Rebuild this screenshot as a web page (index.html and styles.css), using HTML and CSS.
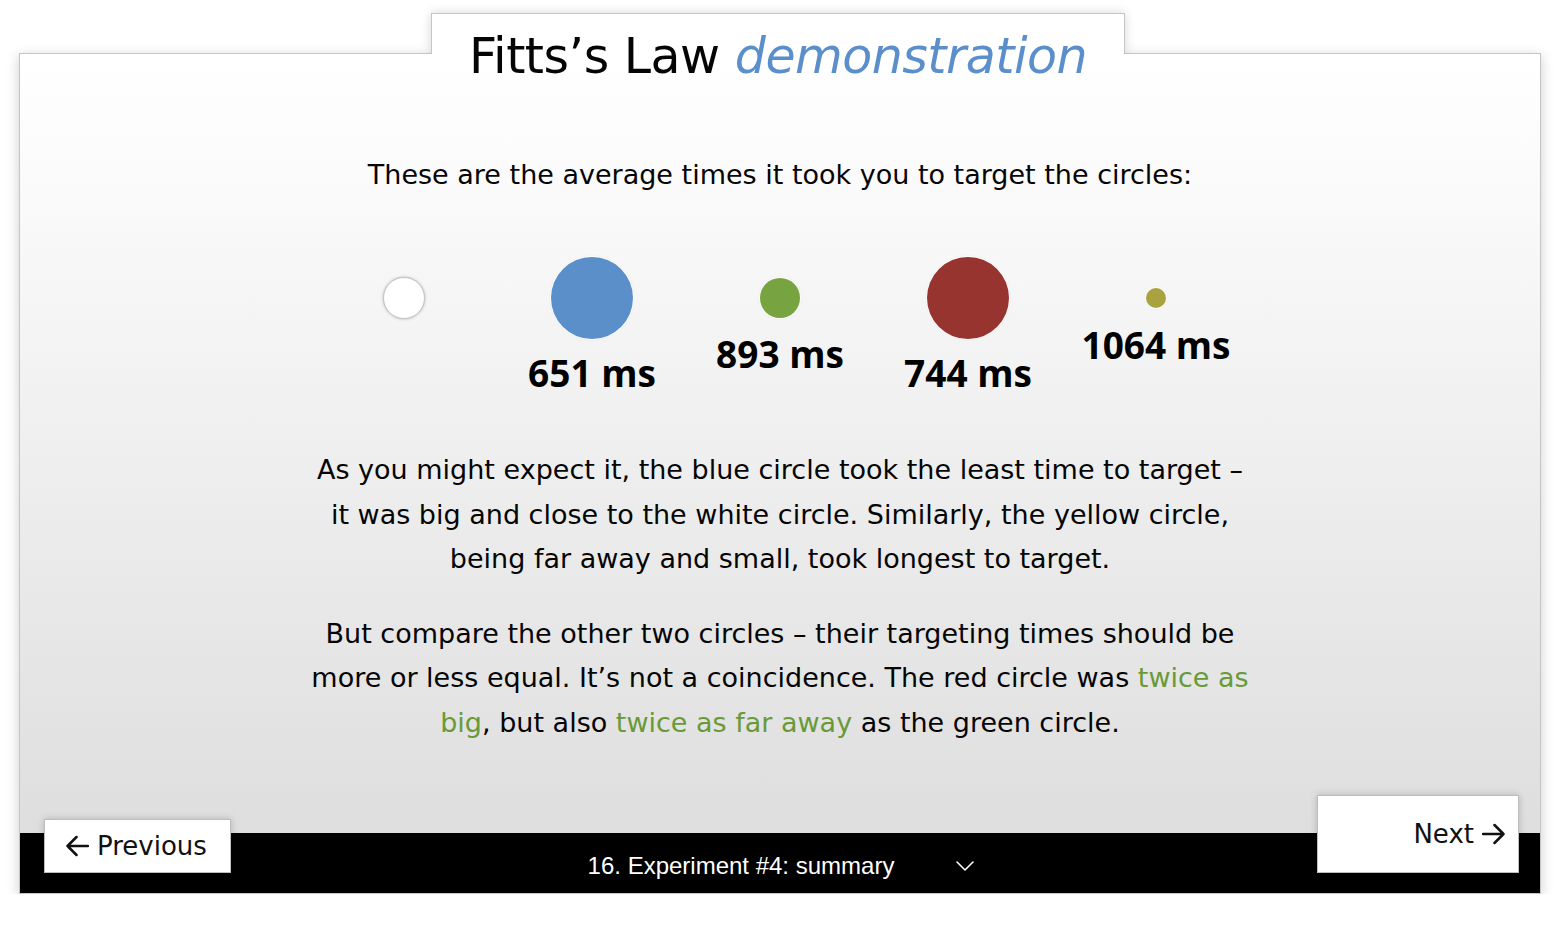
FILE: index.html
```html
<!DOCTYPE html>
<html lang="en">
<head>
<meta charset="utf-8">
<title>Fitts's Law demonstration</title>
<link rel="stylesheet" href="styles.css">
</head>
<body>
<div class="stage">
  <header class="tab">
    <h1 class="title">Fitts’s Law <em class="title-accent">demonstration</em></h1>
  </header>
  <main class="panel">
    <section class="content">
      <p class="intro">These are the average times it took you to target the circles:</p>
      <div class="targets">
        <div class="target">
          <span class="dot dot-start"></span>
        </div>
        <div class="target">
          <span class="dot dot-lg dot-blue"></span>
          <span class="time time-lg">651 ms</span>
        </div>
        <div class="target">
          <span class="dot dot-md dot-green"></span>
          <span class="time time-md">893 ms</span>
        </div>
        <div class="target">
          <span class="dot dot-lg dot-red"></span>
          <span class="time time-lg">744 ms</span>
        </div>
        <div class="target">
          <span class="dot dot-sm dot-yellow"></span>
          <span class="time time-sm">1064 ms</span>
        </div>
      </div>
      <p class="para">As you might expect it, the blue circle took the least time to target – it was big and close to the white circle. Similarly, the yellow circle, being far away and small, took longest to target.</p>
      <p class="para para-next">But compare the other two circles – their targeting times should be more or less equal. It’s not a coincidence. The red circle was <span class="hl">twice as</span> <span class="hl">big</span>, but also <span class="hl">twice as far away</span> as the green circle.</p>
    </section>
    <footer class="bar">
      <button class="nav nav-prev" type="button">
        <svg class="arrow" width="24" height="22" viewBox="0 0 24 22" aria-hidden="true"><path d="M23 11H2.5M11.5 2L2.5 11L11.5 20" fill="none" stroke="#111" stroke-width="2.5" stroke-linecap="round" stroke-linejoin="round"/></svg>
        <span>Previous</span>
      </button>
      <div class="chapter">
        <span class="chapter-name">16. Experiment #4: summary</span>
        <svg class="chev" width="18" height="10" viewBox="0 0 18 10" aria-hidden="true"><path d="M1 1L9 9L17 1" fill="none" stroke="#fff" stroke-width="1.6" stroke-linecap="round" stroke-linejoin="round"/></svg>
      </div>
      <button class="nav nav-next" type="button">
        <span>Next</span>
        <svg class="arrow" width="24" height="22" viewBox="0 0 24 22" aria-hidden="true"><path d="M1 11H21.5M12.5 2L21.5 11L12.5 20" fill="none" stroke="#111" stroke-width="2.5" stroke-linecap="round" stroke-linejoin="round"/></svg>
      </button>
    </footer>
  </main>
</div>
</body>
</html>
```
FILE: styles.css
```css
html, body {
  margin: 0;
  padding: 0;
  background: #fff;
}

body {
  font-family: "DejaVu Sans", "Liberation Sans", sans-serif;
  color: #050505;
}

.stage {
  width: 1522px;
  margin-left: 19px;
  padding-top: 13px;
  display: flex;
  flex-direction: column;
}

.tab {
  align-self: flex-start;
  margin-left: 412px;
  width: 694px;
  height: 41px;
  box-sizing: border-box;
  border: 1px solid #c6c6c6;
  border-bottom: 0;
  background: #fff;
  margin-bottom: -1px;
  padding-top: 18px;
  position: relative;
  z-index: 1;
}

.tab::before {
  content: "";
  position: absolute;
  left: -1px;
  right: -1px;
  top: -1px;
  bottom: 0;
  box-shadow: 0 0 10px rgba(0, 0, 0, 0.16);
  clip-path: inset(-20px -20px 0 -20px);
  z-index: -1;
}

.title {
  margin: 0;
  font-size: 49px;
  line-height: 49px;
  font-weight: normal;
  letter-spacing: -0.5px;
  text-align: center;
  color: #050505;
  white-space: nowrap;
}

.title-accent {
  color: #5b8fcc;
  font-style: italic;
}

.panel {
  height: 841px;
  box-sizing: border-box;
  border: 1px solid #c6c6c6;
  box-shadow: 0 3px 12px rgba(0, 0, 0, 0.2);
  background: #fff;
  display: flex;
  flex-direction: column;
}

.content {
  flex: 1;
  background: linear-gradient(#ffffff 0%, #fbfbfb 15%, #dedede 100%);
  padding-top: 104px;
  display: flex;
  flex-direction: column;
  align-items: center;
}

.intro {
  margin: 0;
  font-size: 27px;
  line-height: 34px;
  text-align: center;
}

.targets {
  margin-top: 65px;
  display: grid;
  grid-template-columns: repeat(5, 188px);
  align-items: start;
}

.target {
  display: flex;
  flex-direction: column;
  align-items: center;
}

.dot {
  display: block;
  border-radius: 50%;
  box-shadow: 0 0 0 1px rgba(255, 255, 255, 0.85), 0 0 3px rgba(0, 0, 0, 0.12);
}

.dot-start {
  width: 40px;
  height: 40px;
  margin-top: 20px;
  background: #fff;
  border: 1px solid #c4c4c4;
  box-shadow: 0 0 3px rgba(0, 0, 0, 0.25);
}

.dot-lg {
  width: 82px;
  height: 82px;
}

.dot-md {
  width: 40px;
  height: 40px;
  margin-top: 21px;
}

.dot-sm {
  width: 20px;
  height: 20px;
  margin-top: 31px;
}

.dot-blue { background: #5b8fca; }
.dot-green { background: #77a340; }
.dot-red { background: #973430; }
.dot-yellow { background: #a8a23f; }

.time {
  font-family: "Open Sans", "DejaVu Sans", sans-serif;
  font-weight: 700;
  font-size: 37px;
  line-height: 44px;
  color: #000;
  white-space: nowrap;
}

.time-lg { margin-top: 12px; }
.time-md { margin-top: 14px; }
.time-sm { margin-top: 15px; }

.para {
  margin: 53px 0 0;
  width: 950px;
  font-size: 27px;
  line-height: 44.5px;
  text-align: center;
}

.para-next {
  margin-top: 30px;
}

.hl {
  color: #699a38;
}

.bar {
  height: 60px;
  flex: none;
  background: #000;
  display: flex;
  align-items: center;
  padding: 0 21px 0 24px;
}

.nav {
  align-self: flex-end;
  margin-bottom: 20px;
  box-sizing: border-box;
  background: #fff;
  border: 1px solid #bdbdbd;
  box-shadow: 0 0 7px rgba(0, 0, 0, 0.2);
  font-family: "DejaVu Sans", sans-serif;
  font-size: 26px;
  color: #111;
  display: flex;
  align-items: center;
  gap: 8px;
  cursor: pointer;
  flex: none;
}

.nav-prev {
  width: 187px;
  height: 54px;
  padding: 0 0 0 20px;
}

.nav-next {
  width: 202px;
  height: 78px;
  padding: 0 12px 0 0;
  justify-content: flex-end;
}

.arrow {
  display: block;
  flex: none;
}

.chapter {
  flex: 1;
  margin: 0 17px 0 21px;
  padding: 5px 0 0 10px;
  display: flex;
  justify-content: center;
  align-items: center;
  gap: 62px;
  color: #fff;
  font-family: "Liberation Sans", Arial, sans-serif;
  font-size: 24px;
}

.chev {
  display: block;
  flex: none;
}
```
